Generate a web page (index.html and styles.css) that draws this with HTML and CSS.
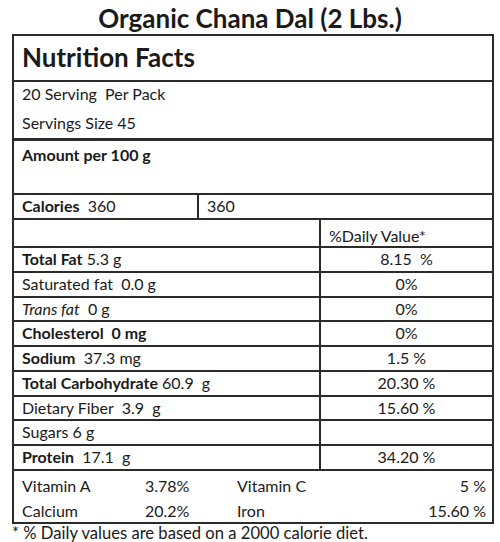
FILE: index.html
```html
<!DOCTYPE html>
<html lang="en">
<head>
    <meta charset="UTF-8">
    <meta name="viewport" content="width=device-width, initial-scale=1.0">
    <title>Organic Chana Dal (2 Lbs.)</title>
    <link rel="stylesheet" href="styles.css">
</head>
<body>

<h1 class="title">Organic Chana Dal (2 Lbs.)</h1>

<div class="label">
    <div class="label-head">Nutrition Facts</div>

    <div class="serving">
        <div>20 Serving&nbsp; Per Pack</div>
        <div>Servings Size 45</div>
    </div>

    <div class="amount"><b>Amount per 100 g</b></div>

    <div class="calories">
        <div class="cell"><b>Calories</b>&nbsp; 360</div>
        <div class="cell">360</div>
    </div>

    <div class="row dv-head">
        <div class="cell"></div>
        <div class="cell">%Daily Value*</div>
    </div>
    <div class="row">
        <div class="cell"><b>Total Fat</b> 5.3 g</div>
        <div class="cell val">8.15&nbsp; %</div>
    </div>
    <div class="row">
        <div class="cell">Saturated fat&nbsp; 0.0 g</div>
        <div class="cell val">0%</div>
    </div>
    <div class="row">
        <div class="cell"><i>Trans fat</i>&nbsp; 0 g</div>
        <div class="cell val">0%</div>
    </div>
    <div class="row">
        <div class="cell"><b>Cholesterol&nbsp; 0 mg</b></div>
        <div class="cell val">0%</div>
    </div>
    <div class="row">
        <div class="cell"><b>Sodium</b>&nbsp; 37.3 mg</div>
        <div class="cell val">1.5 %</div>
    </div>
    <div class="row">
        <div class="cell"><b>Total Carbohydrate</b> 60.9&nbsp; g</div>
        <div class="cell val">20.30 %</div>
    </div>
    <div class="row">
        <div class="cell">Dietary Fiber&nbsp; 3.9&nbsp; g</div>
        <div class="cell val">15.60 %</div>
    </div>
    <div class="row">
        <div class="cell">Sugars 6 g</div>
        <div class="cell val"></div>
    </div>
    <div class="row">
        <div class="cell"><b>Protein</b>&nbsp; 17.1&nbsp; g</div>
        <div class="cell val">34.20 %</div>
    </div>

    <div class="vitamins">
        <span>Vitamin A</span><span>3.78%</span><span>Vitamin C</span><span class="right">5 %</span>
        <span>Calcium</span><span>20.2%</span><span>Iron</span><span class="right">15.60 %</span>
    </div>
</div>

<p class="note">* % Daily values are based on a 2000 calorie diet.</p>

</body>
</html>
```

FILE: styles.css
```css
body {
    margin: 0;
    font-family: Lato, "Open Sans", sans-serif;
    font-size: 16px;
    color: #1a1a1a;
    background-color: #fff;
}
.title {
    margin: 0;
    height: 34px;
    line-height: 36px;
    text-align: center;
    font-size: 26px;
    font-weight: bold;
}
.label {
    margin: 0 6px 0 12px;
    border: 2px solid #2b2b2b;
}
.label-head {
    height: 44px;
    padding-left: 8px;
    line-height: 42px;
    font-size: 26px;
    font-weight: bold;
    border-bottom: 2px solid #2b2b2b;
}
.serving {
    padding: 2px 8px 0;
    height: 54px;
    border-bottom: 3px solid #2b2b2b;
}
.serving div {
    height: 29px;
    line-height: 20px;
}
.amount {
    height: 49px;
    padding: 3px 8px 0;
    line-height: 22px;
    border-bottom: 2px solid #2b2b2b;
}
.calories {
    display: grid;
    grid-template-columns: 183px 1fr;
    height: 23px;
    border-bottom: 2px solid #2b2b2b;
}
.cell {
    padding: 0 8px;
    line-height: 21px;
}
.calories .cell + .cell,
.row .cell + .cell {
    border-left: 2px solid #2b2b2b;
}
.row {
    display: grid;
    grid-template-columns: 305px 1fr;
    height: 22.78px;
    border-bottom: 2px solid #2b2b2b;
}
.dv-head {
    height: 26px;
}
.dv-head .cell {
    line-height: 32px;
}
.row .val {
    text-align: center;
}
.vitamins {
    display: grid;
    grid-template-columns: 123px 92px 1fr auto;
    grid-auto-rows: 25px;
    padding: 2px 6px 0 8px;
    height: 49px;
    line-height: 25px;
}
.vitamins .right {
    text-align: right;
}
.note {
    margin: 0;
    padding-left: 12px;
    font-size: 16.6px;
    line-height: 18px;
}
```
